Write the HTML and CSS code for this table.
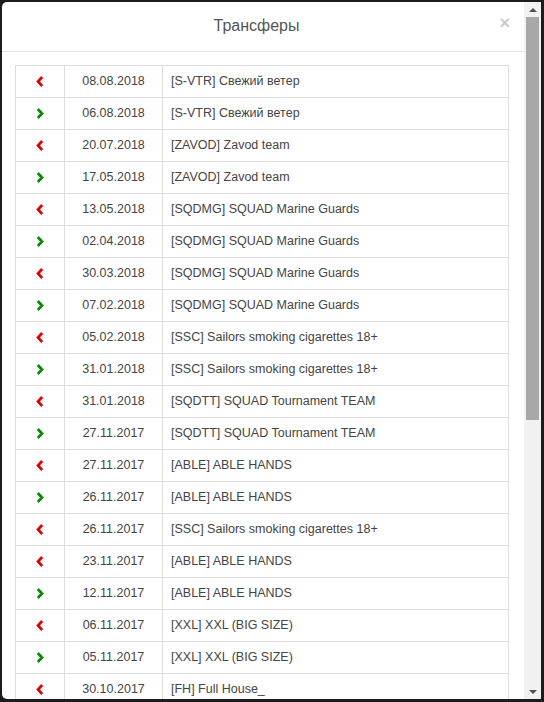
FILE: index.html
```html
<!DOCTYPE html>
<html lang="ru">
<head>
    <meta charset="UTF-8">
    <meta name="viewport" content="width=device-width, initial-scale=1.0">
    <title>Трансферы</title>
    <link rel="stylesheet" href="styles.css">
</head>
<body>
    <div class="screen">
        <div class="modal">
            <div class="modal-header">
                <h4 class="modal-title">Трансферы</h4>
                <button class="close" type="button">&times;</button>
            </div>
            <div class="modal-body">
                <table class="transfers">
                    <colgroup>
                        <col class="col-dir">
                        <col class="col-date">
                        <col>
                    </colgroup>
                    <tbody>
                        <tr><td class="dir out"><svg viewBox="0 0 8 11"><polyline points="6.2,1 2,5.5 6.2,10"/></svg></td><td class="date">08.08.2018</td><td class="team">[S-VTR] Свежий ветер</td></tr>
                        <tr><td class="dir in"><svg viewBox="0 0 8 11"><polyline points="1.8,1 6,5.5 1.8,10"/></svg></td><td class="date">06.08.2018</td><td class="team">[S-VTR] Свежий ветер</td></tr>
                        <tr><td class="dir out"><svg viewBox="0 0 8 11"><polyline points="6.2,1 2,5.5 6.2,10"/></svg></td><td class="date">20.07.2018</td><td class="team">[ZAVOD] Zavod team</td></tr>
                        <tr><td class="dir in"><svg viewBox="0 0 8 11"><polyline points="1.8,1 6,5.5 1.8,10"/></svg></td><td class="date">17.05.2018</td><td class="team">[ZAVOD] Zavod team</td></tr>
                        <tr><td class="dir out"><svg viewBox="0 0 8 11"><polyline points="6.2,1 2,5.5 6.2,10"/></svg></td><td class="date">13.05.2018</td><td class="team">[SQDMG] SQUAD Marine Guards</td></tr>
                        <tr><td class="dir in"><svg viewBox="0 0 8 11"><polyline points="1.8,1 6,5.5 1.8,10"/></svg></td><td class="date">02.04.2018</td><td class="team">[SQDMG] SQUAD Marine Guards</td></tr>
                        <tr><td class="dir out"><svg viewBox="0 0 8 11"><polyline points="6.2,1 2,5.5 6.2,10"/></svg></td><td class="date">30.03.2018</td><td class="team">[SQDMG] SQUAD Marine Guards</td></tr>
                        <tr><td class="dir in"><svg viewBox="0 0 8 11"><polyline points="1.8,1 6,5.5 1.8,10"/></svg></td><td class="date">07.02.2018</td><td class="team">[SQDMG] SQUAD Marine Guards</td></tr>
                        <tr><td class="dir out"><svg viewBox="0 0 8 11"><polyline points="6.2,1 2,5.5 6.2,10"/></svg></td><td class="date">05.02.2018</td><td class="team">[SSC] Sailors smoking cigarettes 18+</td></tr>
                        <tr><td class="dir in"><svg viewBox="0 0 8 11"><polyline points="1.8,1 6,5.5 1.8,10"/></svg></td><td class="date">31.01.2018</td><td class="team">[SSC] Sailors smoking cigarettes 18+</td></tr>
                        <tr><td class="dir out"><svg viewBox="0 0 8 11"><polyline points="6.2,1 2,5.5 6.2,10"/></svg></td><td class="date">31.01.2018</td><td class="team">[SQDTT] SQUAD Tournament TEAM</td></tr>
                        <tr><td class="dir in"><svg viewBox="0 0 8 11"><polyline points="1.8,1 6,5.5 1.8,10"/></svg></td><td class="date">27.11.2017</td><td class="team">[SQDTT] SQUAD Tournament TEAM</td></tr>
                        <tr><td class="dir out"><svg viewBox="0 0 8 11"><polyline points="6.2,1 2,5.5 6.2,10"/></svg></td><td class="date">27.11.2017</td><td class="team">[ABLE] ABLE HANDS</td></tr>
                        <tr><td class="dir in"><svg viewBox="0 0 8 11"><polyline points="1.8,1 6,5.5 1.8,10"/></svg></td><td class="date">26.11.2017</td><td class="team">[ABLE] ABLE HANDS</td></tr>
                        <tr><td class="dir out"><svg viewBox="0 0 8 11"><polyline points="6.2,1 2,5.5 6.2,10"/></svg></td><td class="date">26.11.2017</td><td class="team">[SSC] Sailors smoking cigarettes 18+</td></tr>
                        <tr><td class="dir out"><svg viewBox="0 0 8 11"><polyline points="6.2,1 2,5.5 6.2,10"/></svg></td><td class="date">23.11.2017</td><td class="team">[ABLE] ABLE HANDS</td></tr>
                        <tr><td class="dir in"><svg viewBox="0 0 8 11"><polyline points="1.8,1 6,5.5 1.8,10"/></svg></td><td class="date">12.11.2017</td><td class="team">[ABLE] ABLE HANDS</td></tr>
                        <tr><td class="dir out"><svg viewBox="0 0 8 11"><polyline points="6.2,1 2,5.5 6.2,10"/></svg></td><td class="date">06.11.2017</td><td class="team">[XXL] XXL (BIG SIZE)</td></tr>
                        <tr><td class="dir in"><svg viewBox="0 0 8 11"><polyline points="1.8,1 6,5.5 1.8,10"/></svg></td><td class="date">05.11.2017</td><td class="team">[XXL] XXL (BIG SIZE)</td></tr>
                        <tr><td class="dir out"><svg viewBox="0 0 8 11"><polyline points="6.2,1 2,5.5 6.2,10"/></svg></td><td class="date">30.10.2017</td><td class="team">[FH] Full House_</td></tr>
                    </tbody>
                </table>
            </div>
        </div>
        <div class="scrollbar">
            <div class="sb-arrow up"></div>
            <div class="sb-track"><div class="sb-thumb"></div></div>
            <div class="sb-arrow down"></div>
        </div>
    </div>
</body>
</html>
```

FILE: styles.css
```css
html, body {
    margin: 0;
    height: 100%;
}
body {
    background-color: #1c1c1c;
    font-family: 'Liberation Sans', Arial, sans-serif;
    overflow: hidden;
}
.screen {
    display: flex;
    box-sizing: border-box;
    height: 702px;
    padding: 2px 3px 3px 2px;
}
.modal {
    flex: 1;
    background-color: #fff;
    border-radius: 5px 0 0 5px;
    overflow: hidden;
    display: flex;
    flex-direction: column;
}
.modal-header {
    position: relative;
    height: 49px;
    padding: 0 28px 0 15px;
    border-bottom: 1px solid #e5e5e5;
    flex-shrink: 0;
}
.modal-title {
    margin: 0;
    font-size: 16px;
    font-weight: normal;
    line-height: 47px;
    text-align: center;
    color: #555;
}
.close {
    position: absolute;
    top: 9px;
    right: 14px;
    padding: 0;
    border: none;
    background: none;
    font-family: 'Liberation Sans', Arial, sans-serif;
    font-size: 18px;
    font-weight: bold;
    line-height: 24px;
    color: #c9c9c9;
    cursor: pointer;
}
.modal-body {
    padding: 13px 15px 0 13px;
}
.transfers {
    width: 100%;
    table-layout: fixed;
    border-collapse: collapse;
    border: 1px solid #ddd;
    font-size: 12.5px;
    line-height: 14px;
    color: #444;
}
.col-dir {
    width: 49px;
}
.col-date {
    width: 98px;
}
.transfers td {
    height: 30px;
    padding: 0 8px 1px;
    border: 1px solid #ddd;
    vertical-align: middle;
    white-space: nowrap;
}
.transfers .dir {
    padding: 0 0 1px;
    text-align: center;
}
.dir svg {
    display: inline-block;
    width: 8px;
    height: 11px;
    vertical-align: middle;
    fill: none;
    stroke-width: 2.7;
    stroke-linejoin: miter;
}
.dir.out svg {
    stroke: #e30000;
}
.dir.in svg {
    stroke: #0a8a0a;
}
.transfers .date {
    text-align: center;
}
.scrollbar {
    width: 17px;
    background-color: #f1f1f1;
    display: flex;
    flex-direction: column;
}
.sb-arrow {
    height: 15px;
    display: flex;
    justify-content: center;
    align-items: center;
}
.sb-arrow::before {
    content: '';
    border-left: 4px solid transparent;
    border-right: 4px solid transparent;
}
.sb-arrow.up::before {
    border-bottom: 4px solid #505050;
}
.sb-arrow.down::before {
    border-top: 4px solid #505050;
}
.sb-track {
    flex: 1;
    padding: 0 2px;
}
.sb-thumb {
    height: 403px;
    background-color: #a8a8a8;
}
```
